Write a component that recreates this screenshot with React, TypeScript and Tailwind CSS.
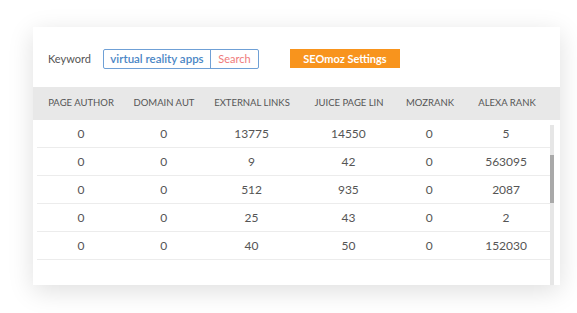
import React from "react";

const columns = [
  { label: "PAGE AUTHOR", w: "w-[88px]" },
  { label: "DOMAIN AUT", w: "w-[78px]" },
  { label: "EXTERNAL LINKS", w: "w-[98px]" },
  { label: "JUICE PAGE LIN", w: "w-[96px]" },
  { label: "MOZRANK", w: "w-[66px]" },
  { label: "ALEXA RANK", w: "w-[88px]" },
];

const rows = [
  ["0", "0", "13775", "14550", "0", "5"],
  ["0", "0", "9", "42", "0", "563095"],
  ["0", "0", "512", "935", "0", "2087"],
  ["0", "0", "25", "43", "0", "2"],
  ["0", "0", "40", "50", "0", "152030"],
];

export default function App() {
  return (
    <div
      className="w-[577px] h-[313px] bg-white pt-[27px] pl-[33px]"
      style={{ fontFamily: "Lato, 'Open Sans', sans-serif" }}
    >
      <div className="w-[527px] h-[258px] bg-white shadow-[0_6px_24px_rgba(0,0,0,0.13)] flex flex-col">
        {/* toolbar */}
        <div className="h-[60px] flex items-start pt-[22px] pl-[15px]">
          <span className="text-[11px] text-[#555] leading-[20px] w-[55px]">Keyword</span>
          <div className="flex h-[20px] w-[156px] border border-[#6fa0d6] rounded-[2px] whitespace-nowrap">
            <span className="w-[107px] text-center text-[11.5px] font-semibold text-[#4a86c5] leading-[18px] border-r border-[#6fa0d6]">
              virtual reality apps
            </span>
            <span className="flex-1 text-center text-[11px] text-[#ef7b7b] leading-[18px]">Search</span>
          </div>
          <button className="ml-[31px] h-[19px] w-[110px] bg-[#f8941d] text-white text-[11px] font-bold leading-[19px] text-center whitespace-nowrap">
            SEOmoz Settings
          </button>
        </div>

        {/* header */}
        <div className="h-[33px] bg-[#e8e8e8] flex items-center pl-[4px]">
          {columns.map((c) => (
            <div key={c.label} className={`${c.w} text-center text-[9.5px] text-[#555]`}>
              {c.label}
            </div>
          ))}
        </div>

        {/* body */}
        <div className="flex flex-1 pl-[4px]">
          <div className="w-[513px]">
            {rows.map((r, i) => (
              <div key={i} className="h-[28px] flex items-center border-b border-[#ececec]">
                {r.map((v, j) => (
                  <div key={j} className={`${columns[j].w} text-center text-[12px] text-[#555]`}>
                    {v}
                  </div>
                ))}
              </div>
            ))}
          </div>
          <div className="w-[4px] mt-[5px] bg-[#e6e6e6] flex flex-col">
            <div className="h-[30px]" />
            <div className="h-[48px] bg-[#a9a9a9]" />
          </div>
        </div>
      </div>
    </div>
  );
}
